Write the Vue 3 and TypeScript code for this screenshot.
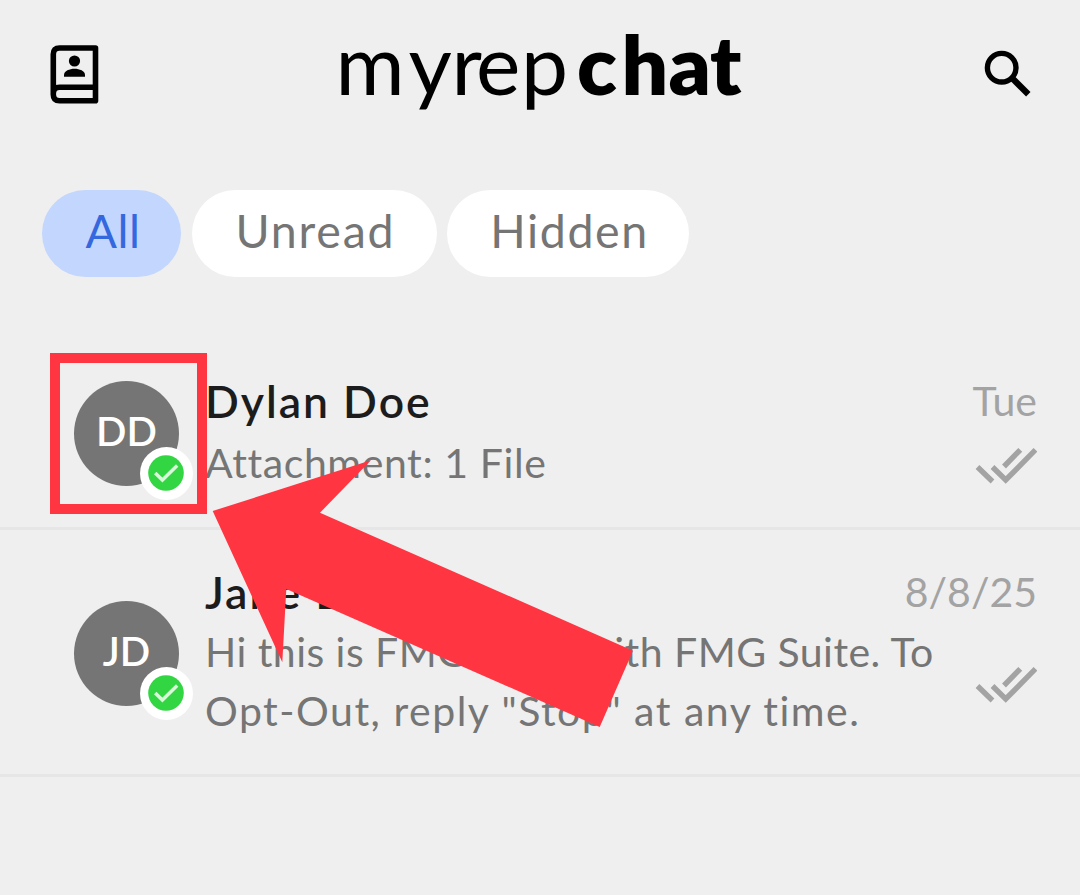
<script setup lang="ts">
import { ref } from 'vue';

interface Conversation {
    id: number;
    initials: string;
    name: string;
    date: string;
    lines: string[];
    highlighted?: boolean;
}

const filters = ['All', 'Unread', 'Hidden'];
const activeFilter = ref('All');

const conversations: Conversation[] = [
    {
        id: 1,
        initials: 'DD',
        name: 'Dylan Doe',
        date: 'Tue',
        lines: ['Attachment: 1 File'],
        highlighted: true,
    },
    {
        id: 2,
        initials: 'JD',
        name: 'Jane Doe',
        date: '8/8/25',
        lines: [
            'Hi this is FMG Suite with FMG Suite. To',
            'Opt-Out, reply "Stop" at any time.',
        ],
    },
];
</script>

<template>
    <main class="screen">
        <header class="topbar">
            <button class="icon-button" aria-label="Contacts">
                <svg width="49" height="59" viewBox="0 0 49 59">
                    <path
                        d="M45.5 3H9.5Q3.3 3 3.3 9.2V49.5Q3.3 55.8 9.5 55.8H45.5ZM3.3 48.5Q3.3 42.3 9.5 42.3H45.5"
                        fill="none"
                        stroke="#000"
                        stroke-width="5.6"
                        stroke-linejoin="round"
                    />
                    <circle cx="24.5" cy="16" r="5.6" />
                    <path d="M14 31.8V30C14 26 19.5 23.8 24.5 23.8S35 26 35 30V31.8Z" />
                </svg>
            </button>
            <svg class="logo" width="420" height="124" viewBox="0 0 420 124">
                <text class="logo-light" x="3.5 76.5 119.5 144 189" y="83">myrep</text>
                <text class="logo-bold" x="245 289.5 336.5 378" y="83">chat</text>
            </svg>
            <button class="icon-button" aria-label="Search">
                <svg width="48" height="48" viewBox="0 0 48 48" fill="none" stroke="#000">
                    <circle cx="17.7" cy="17.7" r="14.3" stroke-width="5.4" />
                    <path d="M28 28L44.3 44.3" stroke-width="6.2" />
                </svg>
            </button>
        </header>

        <nav class="filters">
            <button
                v-for="filter in filters"
                :key="filter"
                :class="['chip', `chip-${filter.toLowerCase()}`, { active: filter === activeFilter }]"
                @click="activeFilter = filter"
            >
                <span>{{ filter }}</span>
            </button>
        </nav>

        <section class="list">
            <article v-for="item in conversations" :key="item.id" :class="['row', `row-${item.id}`]">
                <div class="avatar">
                    <span>{{ item.initials }}</span>
                    <svg class="badge" width="53" height="53" viewBox="0 0 53 53">
                        <circle cx="26.5" cy="26.5" r="26.5" fill="#fff" />
                        <circle cx="26" cy="26" r="17.8" fill="#32d642" />
                        <path d="M15.2 26L22.4 33L37.2 18.5" fill="none" stroke="#d8f8d8" stroke-width="3.4" />
                    </svg>
                    <div v-if="item.highlighted" class="highlight" />
                </div>
                <div class="body">
                    <div class="name">{{ item.name }}</div>
                    <div v-for="line in item.lines" :key="line" class="line">{{ line }}</div>
                </div>
                <div class="meta">
                    <span class="date">{{ item.date }}</span>
                    <svg class="ticks" width="62" height="38" viewBox="0 0 62 38">
                        <path
                            d="M2.5 20L17.5 34.5M17.5 20L30.7 33L60.5 2.8M29 19.5L45.3 2.8"
                            fill="none"
                            stroke="#a3a3a3"
                            stroke-width="5.4"
                        />
                    </svg>
                </div>
            </article>
        </section>

        <svg class="arrow" width="1080" height="895" viewBox="0 0 1080 895">
            <polygon
                points="212.7,511 371,460.3 320,512.7 633,650.7 599.7,727 286.3,589 282.3,662.3"
                fill="#ff3542"
            />
        </svg>
    </main>
</template>

<style>
body {
    margin: 0;
    background: #efefef;
}
</style>

<style scoped>
.screen {
    position: relative;
    box-sizing: border-box;
    width: 1080px;
    height: 895px;
    overflow: hidden;
    background: #efefef;
    font-family: Lato, 'Open Sans', sans-serif;
}

button {
    padding: 0;
    border: 0;
    background: none;
    font: inherit;
}

.topbar {
    display: flex;
    align-items: center;
    justify-content: space-between;
    box-sizing: border-box;
    height: 148px;
    padding: 0 48px 0 50px;
}

.icon-button svg {
    display: block;
}

.logo {
    overflow: visible;
}

.logo-light {
    font-size: 84px;
    font-weight: 400;
}

.logo-bold {
    font-size: 82px;
    font-weight: 800;
}

.filters {
    display: flex;
    gap: 10.5px;
    height: 87px;
    padding: 42px 42px 0;
}

.chip {
    display: flex;
    align-items: center;
    justify-content: center;
    height: 87px;
    border-radius: 44px;
    background: #fff;
    color: #757575;
    font-size: 46.5px;
    line-height: 80px;
}

.chip span {
    margin-top: -7px;
    margin-left: 3px;
}

.chip-all {
    width: 139px;
    letter-spacing: 0.5px;
}

.chip-unread {
    width: 245px;
    letter-spacing: 1.8px;
}

.chip-hidden {
    width: 242px;
    letter-spacing: 1.6px;
}

.chip.active {
    background: #c3d6fe;
    color: #3567de;
}

.list {
    margin-top: 62px;
}

.row {
    display: flex;
    box-sizing: border-box;
    padding: 31px 43px 35px 74px;
    border-bottom: 3px solid #e6e6e6;
}

.avatar {
    position: relative;
    display: flex;
    align-items: center;
    justify-content: center;
    align-self: center;
    flex: none;
    width: 105px;
    height: 105px;
    margin-top: 6px;
    border-radius: 50%;
    background: #757575;
    color: #fff;
    font-size: 40px;
    font-weight: 600;
    line-height: 100px;
}

.avatar span {
    margin-top: -5px;
}

.badge {
    position: absolute;
    left: 66px;
    top: 66px;
}

.highlight {
    position: absolute;
    left: -24px;
    top: -28px;
    box-sizing: border-box;
    width: 157px;
    height: 161px;
    border: 10px solid #ff3542;
}

.body {
    flex: 1;
    min-width: 0;
    padding-left: 26px;
    white-space: nowrap;
}

.name {
    height: 60px;
    color: #1c1c1c;
    font-size: 44.5px;
    font-weight: 600;
    letter-spacing: 2px;
    line-height: 61px;
}

.line {
    height: 59px;
    color: #757575;
    font-size: 41px;
    letter-spacing: 0.45px;
    line-height: 62px;
}

.line:nth-child(3) {
    letter-spacing: 1.5px;
}

/* single-line previews sit slightly lower under the name */
.row-1 .name {
    height: 62px;
}

.row-1 .line {
    letter-spacing: 0.6px;
}

.row-1 {
    padding-bottom: 36px;
}

.row-2 {
    padding-bottom: 35px;
}

.meta {
    display: grid;
    justify-items: end;
}

.date,
.ticks {
    grid-area: 1 / 1;
}

.date {
    align-self: start;
    color: #a3a3a3;
    font-size: 41px;
    line-height: 62px;
}

.ticks {
    align-self: center;
    margin-top: 70px;
}

.arrow {
    position: absolute;
    left: 0;
    top: 0;
    pointer-events: none;
}
</style>
